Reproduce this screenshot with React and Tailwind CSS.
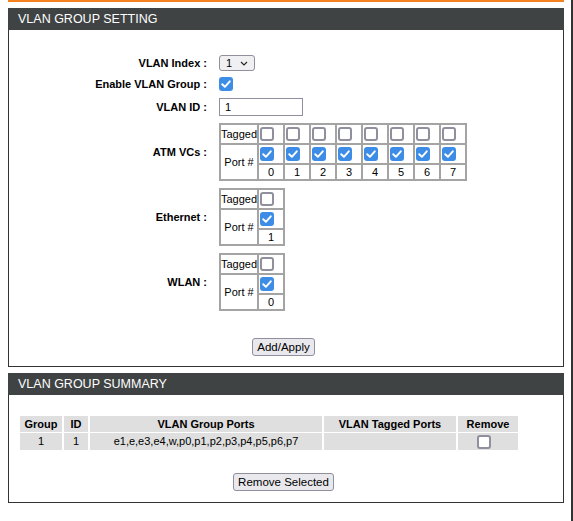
const font = { fontFamily: '"Liberation Sans", Arial, sans-serif' };

function Box({ checked }) {
  if (checked) {
    return (
      <span className="flex h-[14px] w-[14px] items-center justify-center rounded-[3px] bg-[#3d8ce6]">
        <svg viewBox="0 0 14 14" className="h-[14px] w-[14px]">
          <path d="M3.2 7.2 L5.9 9.8 L10.8 4.3" fill="none" stroke="#fff" strokeWidth="1.9" strokeLinecap="round" strokeLinejoin="round" />
        </svg>
      </span>
    );
  }
  return <span className="block h-[14px] w-[14px] rounded-[3px] border-2 border-[#8f8f9d] bg-white" />;
}

function Header({ title }) {
  return (
    <div className="flex h-[22px] items-center bg-[#404343] pl-[10px] text-[12.5px] leading-none text-white">{title}</div>
  );
}

const cell = "border border-[#a4a4a4] p-0 text-[11px] leading-none";

function PortTable({ ports }) {
  return (
    <table className="border-separate border border-[#a4a4a4] border-spacing-0">
      <tbody>
        <tr className="h-[20px]">
          <td className={`${cell} w-[38px] text-left`}>Tagged</td>
          {ports.map((p) => (
            <td key={p} className={`${cell} w-[26px] pl-[1px] align-middle`}>
              <Box />
            </td>
          ))}
        </tr>
        <tr className="h-[20px]">
          <td rowSpan={2} className={`${cell} text-center`}>Port #</td>
          {ports.map((p) => (
            <td key={p} className={`${cell} pl-[1px]`}>
              <Box checked />
            </td>
          ))}
        </tr>
        <tr className="h-[16px]">
          {ports.map((p) => (
            <td key={p} className={`${cell} text-center`}>{p}</td>
          ))}
        </tr>
      </tbody>
    </table>
  );
}

function Row({ label, children, className = "" }) {
  return (
    <div className={`flex items-center ${className}`}>
      <div className="w-[198px] text-right text-[11px] font-bold leading-[14px]">{label}</div>
      <div className="ml-[12px]">{children}</div>
    </div>
  );
}

const btn = "whitespace-nowrap rounded-[3px] border border-[#8f8f9d] bg-[#e9e9ed] px-[4px] text-[11.5px] leading-[16px] text-black";

export default function App() {
  return (
    <div className="flex min-h-[521px] w-[573px] bg-white text-black" style={font}>
      <div className="w-[571px] pl-[8px] pr-[7px]">
        <div className="h-[2px] bg-[#f5821f]" />

        {/* VLAN group setting */}
        <div className="mt-[6px]">
          <Header title="VLAN GROUP SETTING" />
          <div className="border-x border-b border-[#333] pt-[25px] pb-[10px]">
            <Row label="VLAN Index :">
              <div className="flex h-[16px] w-[36px] items-center rounded-[3px] border border-[#8f8f9d] bg-[#f0f0f2] pl-[6px] text-[11px] leading-none">
                <span>1</span>
                <svg viewBox="0 0 8 5" className="ml-[8px] h-[5px] w-[8px]">
                  <path d="M1 1 L4 4 L7 1" fill="none" stroke="#222" strokeWidth="1.1" />
                </svg>
              </div>
            </Row>
            <Row label="Enable VLAN Group :" className="mt-[6px]">
              <Box checked />
            </Row>
            <Row label="VLAN ID :" className="mt-[7px]">
              <div className="flex h-[18px] w-[84px] items-center border border-[#8f8f9d] bg-white pl-[5px] text-[11px] leading-none">1</div>
            </Row>
            <Row label="ATM VCs :" className="mt-[7px] h-[58px]">
              <PortTable ports={[0, 1, 2, 3, 4, 5, 6, 7]} />
            </Row>
            <Row label="Ethernet :" className="mt-[7px] h-[58px]">
              <PortTable ports={[1]} />
            </Row>
            <Row label="WLAN :" className="mt-[7px] h-[58px]">
              <PortTable ports={[0]} />
            </Row>
            <div className="mt-[27px] flex justify-center pr-[5px]">
              <button className={`${btn} h-[18px]`}>Add/Apply</button>
            </div>
          </div>
        </div>

        {/* VLAN group summary */}
        <div className="mt-[6px]">
          <Header title="VLAN GROUP SUMMARY" />
          <div className="border-x border-b border-[#333] pt-[20px] pb-[11px]">
            <table className="ml-[9px] border-separate border-spacing-x-[2px] border-spacing-y-[1px] text-[11px] leading-none">
              <thead>
                <tr className="h-[16px]">
                  <th className="w-[42px] bg-[#dfdfdf] font-bold">Group</th>
                  <th className="w-[24px] bg-[#dfdfdf] font-bold">ID</th>
                  <th className="w-[232px] bg-[#dfdfdf] font-bold">VLAN Group Ports</th>
                  <th className="w-[132px] bg-[#dfdfdf] font-bold">VLAN Tagged Ports</th>
                  <th className="w-[60px] bg-[#dfdfdf] font-bold">Remove</th>
                </tr>
              </thead>
              <tbody>
                <tr className="h-[17px]">
                  <td className="bg-[#dfdfdf] text-center">1</td>
                  <td className="bg-[#dfdfdf] text-center">1</td>
                  <td className="bg-[#dfdfdf] text-center">e1,e,e3,e4,w,p0,p1,p2,p3,p4,p5,p6,p7</td>
                  <td className="bg-[#dfdfdf]" />
                  <td className="bg-[#dfdfdf]">
                    <div className="flex justify-center pr-[8px]">
                      <Box />
                    </div>
                  </td>
                </tr>
              </tbody>
            </table>
            <div className="mt-[22px] flex justify-center pr-[5px]">
              <button className={`${btn} h-[18px]`}>Remove Selected</button>
            </div>
          </div>
        </div>
      </div>
      <div className="w-[2px] bg-[#333]" />
    </div>
  );
}
